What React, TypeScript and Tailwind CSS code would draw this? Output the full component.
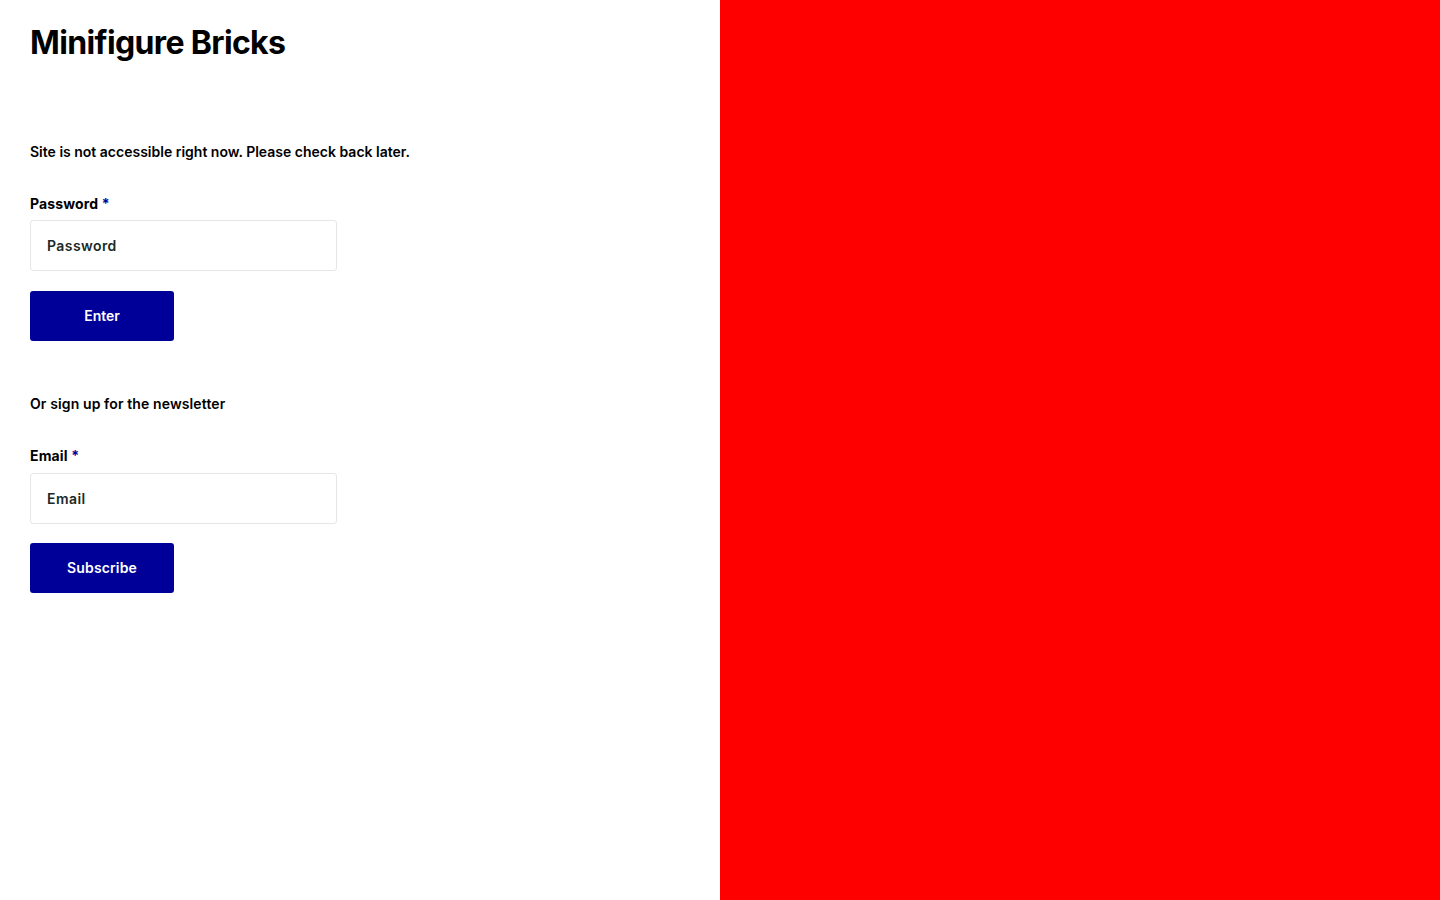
import React from "react";

const font = { fontFamily: "Inter, 'Liberation Sans', sans-serif" };

function Field({ label, placeholder, type, gap }: { label: string; placeholder: string; type: string; gap: string }) {
  return (
    <div className="flex flex-col">
      <label className="text-[14px] leading-[20px] font-bold text-black tracking-[0.01em]">
        {label} <span className="text-[#000099]">*</span>
      </label>
      <input
        type={type}
        placeholder={placeholder}
        className={`${gap} w-[307px] h-[51px] border border-[#e6e6e6] rounded-[3px] px-[16px] text-[14px] font-semibold tracking-[0.03em] text-[#1b2a26] placeholder:text-[#1b2a26] outline-none bg-white`}
      />
    </div>
  );
}

export default function App() {
  return (
    <div className="flex w-full h-[900px]" style={font}>
      <div className="w-[720px] h-full bg-white px-[30px] pt-[23px]">
        <h1 className="text-[32px] leading-[40px] font-bold tracking-[-0.02em] text-black">Minifigure Bricks</h1>
        <p className="mt-[79px] text-[14px] leading-[20px] font-semibold text-black">
          Site is not accessible right now. Please check back later.
        </p>
        <div className="mt-[32px]">
          <Field label="Password" placeholder="Password" type="password" gap="mt-[6px]" />
          <button className="mt-[20px] w-[144px] h-[50px] rounded-[3px] bg-[#000099] text-white text-[14px] font-semibold pb-[2px]">
            Enter
          </button>
        </div>
        <p className="mt-[53px] text-[14px] leading-[20px] font-semibold text-black tracking-[0.008em]">Or sign up for the newsletter</p>
        <div className="mt-[32px]">
          <Field label="Email" placeholder="Email" type="email" gap="mt-[7px]" />
          <button className="mt-[19px] w-[144px] h-[50px] rounded-[3px] bg-[#000099] text-white text-[14px] font-semibold tracking-[0.01em] pb-[2px]">
            Subscribe
          </button>
        </div>
      </div>
      <div className="flex-1 h-full bg-[#ff0000]" />
    </div>
  );
}
